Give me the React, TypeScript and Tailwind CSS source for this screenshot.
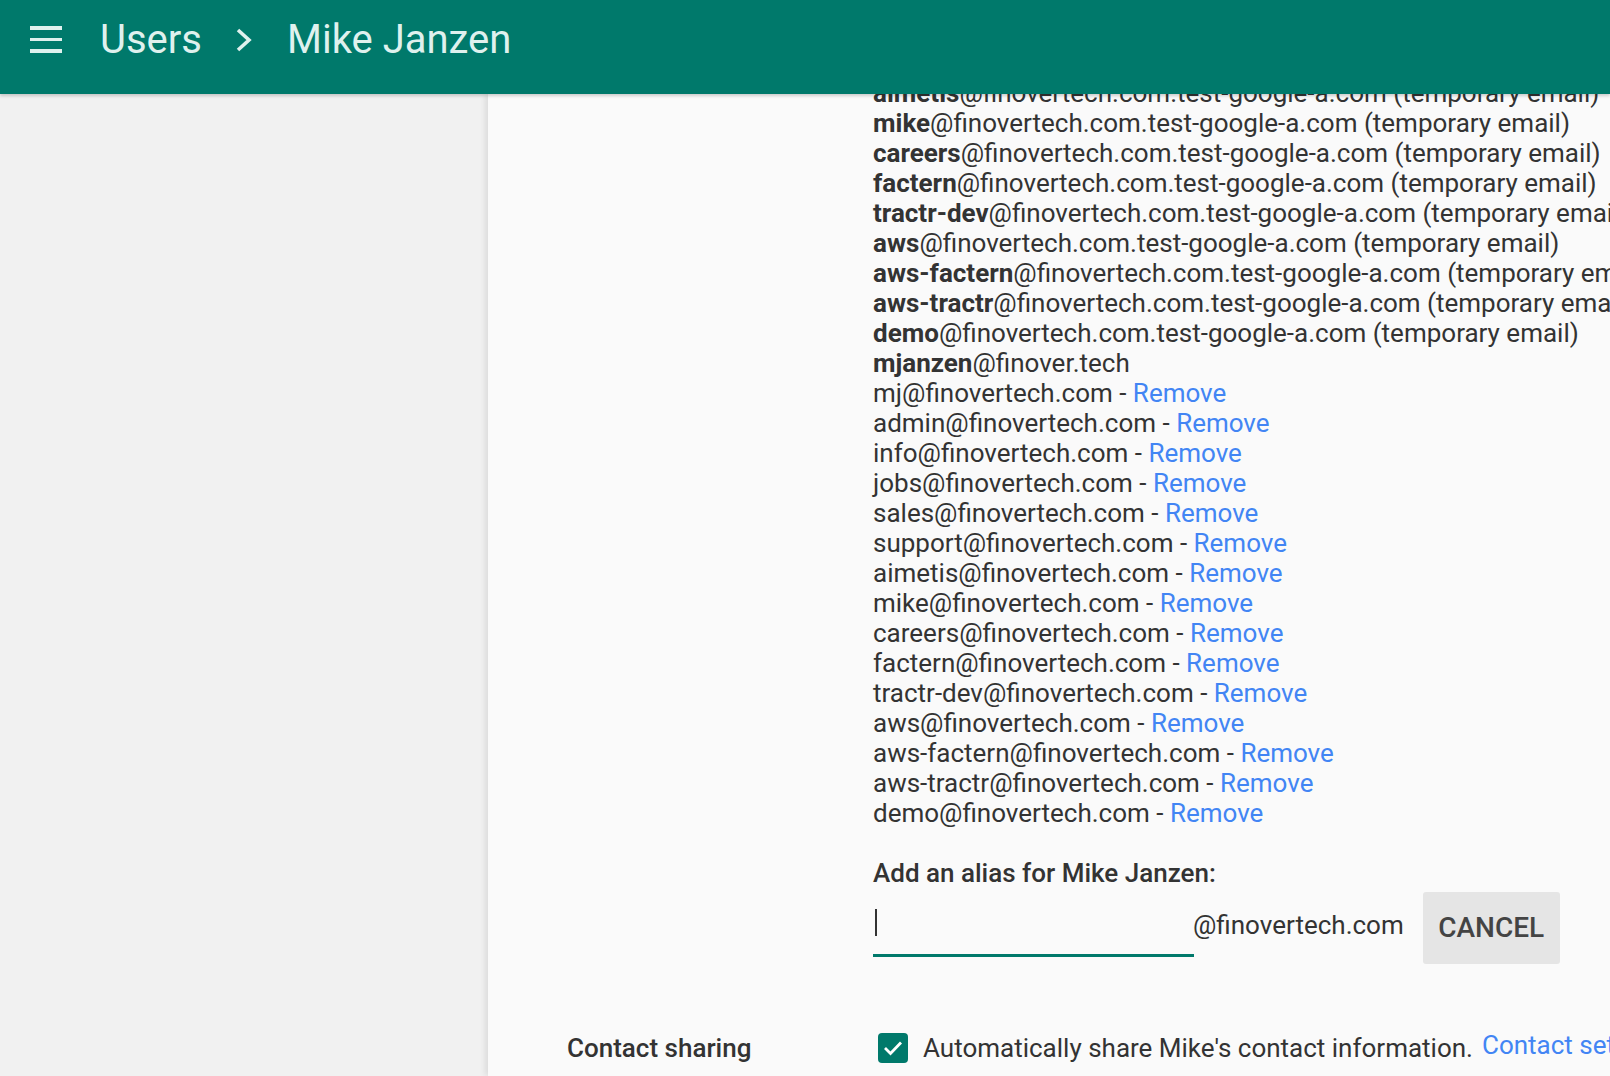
import React from "react";

const temp = [
  "aimetis",
  "mike",
  "careers",
  "factern",
  "tractr-dev",
  "aws",
  "aws-factern",
  "aws-tractr",
  "demo",
];

const aliases = [
  "mj",
  "admin",
  "info",
  "jobs",
  "sales",
  "support",
  "aimetis",
  "mike",
  "careers",
  "factern",
  "tractr-dev",
  "aws",
  "aws-factern",
  "aws-tractr",
  "demo",
];

export default function App() {
  return (
    <div className="h-[1076px] w-[1610px] overflow-hidden flex flex-col bg-[#fafafa] font-['Roboto',sans-serif]">
      <header className="relative z-10 h-[94px] shrink-0 bg-[#00796b] shadow-[0_2px_3px_rgba(0,0,0,0.18)] text-[#dff1ee]">
        <div className="flex h-[79px] items-center">
          <div className="ml-[30px] flex w-[32px] flex-col gap-[8px]">
            <span className="block h-[3.5px] w-[32px] bg-[#dff1ee]" />
            <span className="block h-[3.5px] w-[32px] bg-[#dff1ee]" />
            <span className="block h-[3.5px] w-[32px] bg-[#dff1ee]" />
          </div>
          <span className="ml-[38px] text-[40px] leading-none">Users</span>
          <svg className="ml-[33px]" width="18" height="26" viewBox="0 0 18 26">
            <polyline points="3,3 14,13 3,23" fill="none" stroke="#dff1ee" strokeWidth="3.6" />
          </svg>
          <span className="ml-[34px] text-[40px] leading-none">Mike Janzen</span>
        </div>
      </header>
      <div className="flex flex-1 overflow-hidden">
        <div className="w-[488px] shrink-0 bg-[#f1f1f1]" />
        <div className="relative flex-1 overflow-hidden bg-[#fafafa] shadow-[-3px_0_6px_rgba(0,0,0,0.09)]">
          <div className="mt-[-16px] pl-[385px] text-[26px] text-[#333]">
            {temp.map((t, i) => (
              <div key={"t" + i} className="h-[30px] whitespace-nowrap leading-[30px]">
                <span className="font-bold">{t}</span>@finovertech.com.test-google-a.com (temporary email)
              </div>
            ))}
            <div className="h-[30px] whitespace-nowrap leading-[30px]">
              <span className="font-bold">mjanzen</span>@finover.tech
            </div>
            {aliases.map((a, i) => (
              <div key={"a" + i} className="h-[30px] whitespace-nowrap leading-[30px]">
                {a}@finovertech.com - <span className="text-[#4285f4]">Remove</span>
              </div>
            ))}
            <div className="mt-[30px] h-[30px] whitespace-nowrap font-medium leading-[30px]">Add an alias for Mike Janzen:</div>
            <div className="mt-[4px] flex items-start">
              <div className="relative h-[65px] w-[321px] shrink-0 border-b-[3px] border-[#00796b]">
                <div className="absolute left-[2px] top-[17px] h-[27px] w-[2px] bg-[#333]" />
              </div>
              <div className="ml-[-1px] mt-[18px] shrink-0 whitespace-nowrap leading-[30px] text-[#333]">@finovertech.com</div>
              <button className="ml-[19px] flex h-[72px] w-[137px] shrink-0 items-center justify-center rounded-[3px] bg-[#e5e5e5] text-[28px] font-medium text-[#444]">
                CANCEL
              </button>
            </div>
          </div>
          <div className="mt-[69px] flex h-[30px] items-center pl-[79px] text-[26px] leading-[30px] text-[#333]">
            <div className="w-[311px] shrink-0 whitespace-nowrap font-medium">Contact sharing</div>
            <div className="flex h-[30px] w-[30px] shrink-0 items-center justify-center rounded-[4px] bg-[#00796b]">
              <svg width="22" height="18" viewBox="0 0 22 18">
                <polyline points="3,9 8.5,14.5 19,3.5" fill="none" stroke="#ffffff" strokeWidth="2.8" />
              </svg>
            </div>
            <span className="ml-[15px] shrink-0 whitespace-nowrap">Automatically share Mike's contact information.</span>
            <span className="mb-[6px] ml-[9px] shrink-0 whitespace-nowrap text-[#4285f4]">Contact settings</span>
          </div>
        </div>
      </div>
    </div>
  );
}
